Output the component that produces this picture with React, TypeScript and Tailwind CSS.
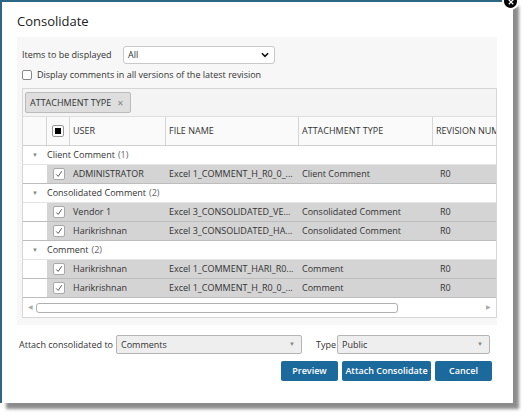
import React from "react";

type Row = { user: string; file: string; type: string; rev: string };
type Group = { name: string; count: number; rows: Row[] };

const groups: Group[] = [
  {
    name: "Client Comment",
    count: 1,
    rows: [{ user: "ADMINISTRATOR", file: "Excel 1_COMMENT_H_R0_0_...", type: "Client Comment", rev: "R0" }],
  },
  {
    name: "Consolidated Comment",
    count: 2,
    rows: [
      { user: "Vendor 1", file: "Excel 3_CONSOLIDATED_VE...", type: "Consolidated Comment", rev: "R0" },
      { user: "Harikrishnan", file: "Excel 3_CONSOLIDATED_HA...", type: "Consolidated Comment", rev: "R0" },
    ],
  },
  {
    name: "Comment",
    count: 2,
    rows: [
      { user: "Harikrishnan", file: "Excel 1_COMMENT_HARI_R0...", type: "Comment", rev: "R0" },
      { user: "Harikrishnan", file: "Excel 1_COMMENT_H_R0_0_...", type: "Comment", rev: "R0" },
    ],
  },
];

function Check() {
  return (
    <span className="flex h-[12px] w-[12px] items-center justify-center rounded-[2px] border border-[#a9a9a9] bg-white">
      <svg width="8" height="8" viewBox="0 0 10 10">
        <path d="M1.5 5.5 L4 8 L8.5 1.5" fill="none" stroke="#555" strokeWidth="1.2" />
      </svg>
    </span>
  );
}

function GroupRow({ g }: { g: Group }) {
  return (
    <div className="flex h-[19px] items-center border-b border-[#e4e4e4] bg-white">
      <span className="w-[24px] pl-[9px] text-[6px] text-[#888]">▼</span>
      <span className="text-[#333]">{g.name}</span>
      <span className="ml-[3px] text-[#666]">({g.count})</span>
    </div>
  );
}

function DataRow({ r }: { r: Row }) {
  return (
    <div className="flex h-[19px] items-center border-b border-[#bdbdbd]">
      <div className="h-full w-[24px] bg-white" />
      <div className="flex h-full flex-1 items-center whitespace-nowrap bg-[#d4d4d4] text-[#333]">
        <div className="flex w-[23px] justify-center">
          <Check />
        </div>
        <div className="w-[96px] overflow-hidden pl-[3px]">{r.user}</div>
        <div className="w-[133px] overflow-hidden pl-[3px]">{r.file}</div>
        <div className="w-[134px] overflow-hidden pl-[3px]">{r.type}</div>
        <div className="flex-1 pl-[7px]">{r.rev}</div>
      </div>
    </div>
  );
}

function GraySelect({ value, className }: { value: string; className: string }) {
  return (
    <div
      className={`flex h-[19px] items-center justify-between rounded-[2px] border border-[#b5b5b5] bg-[#eeeeee] pl-[4px] pr-[6px] text-[#333] ${className}`}
    >
      <span>{value}</span>
      <span className="text-[6px] text-[#888]">▼</span>
    </div>
  );
}

export default function App() {
  return (
    <div
      className="relative h-[418px] w-[529px] overflow-hidden bg-white text-[9px]"
      style={{ fontFamily: '"Open Sans", "Noto Sans", sans-serif' }}
    >
      <div className="relative h-[403px] w-[513px] border-l-[2px] border-t-[2px] border-[#2d6683] bg-white shadow-[6px_6px_3px_rgba(0,0,0,0.45)]">
        {/* close button */}
        <div className="absolute -right-[6px] -top-[9px] flex h-[17px] w-[17px] items-center justify-center rounded-full border-[2px] border-white bg-black">
          <svg width="6" height="6" viewBox="0 0 8 8">
            <path d="M1 1 L7 7 M7 1 L1 7" stroke="white" strokeWidth="1.6" />
          </svg>
        </div>

        <div className="h-[35px] pl-[15px] pt-[10px] text-[13px] leading-[18px] text-[#222]">Consolidate</div>

        <div className="ml-[15px] h-[288px] w-[480px] bg-[#f7f7f7] pl-[5px] pt-[9px]">
          <div className="flex h-[18px] items-center">
            <span className="w-[101px] whitespace-nowrap text-[#333]">Items to be displayed</span>
            <div className="flex h-[18px] w-[152px] items-center justify-between rounded-[3px] border border-[#c8c8c8] bg-white pl-[4px] pr-[5px] text-[#333]">
              <span>All</span>
              <svg width="8" height="6" viewBox="0 0 9 6">
                <path d="M1 1 L4.5 4.5 L8 1" fill="none" stroke="#111" strokeWidth="1.8" />
              </svg>
            </div>
          </div>
          <div className="mt-[5px] flex h-[12px] items-center">
            <span className="h-[10px] w-[10px] rounded-[2px] border border-[#888] bg-white" />
            <span className="ml-[5px] text-[#333]">Display comments in all versions of the latest revision</span>
          </div>

          {/* grid */}
          <div className="mt-[7px] h-[230px] w-[475px] overflow-hidden border border-[#d6d6d6] bg-white">
            <div className="flex h-[28px] items-center border-b border-[#dedede] bg-[#f4f4f4] pl-[2px]">
              <div className="flex h-[21px] items-center rounded-[2px] border border-[#bbbbbb] bg-[#dedede] pl-[4px] pr-[6px] text-[9px] text-[#333]">
                ATTACHMENT TYPE
                <span className="ml-[6px] text-[8px] text-[#888]">✕</span>
              </div>
            </div>
            <div className="flex h-[29px] items-stretch border-b border-[#d0d0d0] bg-[#fafafa] text-[#333]">
              <div className="w-[24px] border-r border-[#d6d6d6]" />
              <div className="flex w-[23px] items-center justify-center border-r border-[#d6d6d6]">
                <span className="flex h-[12px] w-[12px] items-center justify-center rounded-[2px] border border-[#999] bg-white">
                  <span className="h-[6px] w-[6px] bg-black" />
                </span>
              </div>
              <div className="flex w-[96px] items-center border-r border-[#d6d6d6] pl-[3px]">USER</div>
              <div className="flex w-[133px] items-center border-r border-[#d6d6d6] pl-[3px]">FILE NAME</div>
              <div className="flex w-[134px] items-center border-r border-[#d6d6d6] pl-[3px]">ATTACHMENT TYPE</div>
              <div className="flex flex-1 items-center overflow-hidden whitespace-nowrap pl-[3px]">REVISION NUMBER</div>
            </div>
            {groups.map((g) => (
              <React.Fragment key={g.name}>
                <GroupRow g={g} />
                {g.rows.map((r, i) => (
                  <DataRow key={i} r={r} />
                ))}
              </React.Fragment>
            ))}
            <div className="mt-[4px] flex h-[11px] items-center px-[5px]">
              <span className="text-[6px] text-[#aaa]">◀</span>
              <div className="ml-[3px] h-[10px] w-[362px] rounded-[3px] border border-[#b0b0b0] bg-white" />
              <div className="flex-1" />
              <span className="text-[6px] text-[#aaa]">▶</span>
            </div>
          </div>
        </div>

        <div className="mt-[10px] flex h-[19px] items-center pl-[17px]">
          <span className="w-[97px] whitespace-nowrap text-[#333]">Attach consolidated to</span>
          <GraySelect value="Comments" className="w-[186px]" />
          <span className="ml-[14px] w-[21px] text-[#333]">Type</span>
          <GraySelect value="Public" className="w-[153px]" />
        </div>
        <div className="mt-[7px] flex justify-end gap-[4px] pr-[21px]">
          <button className="h-[20px] w-[57px] rounded-[2px] bg-[#1c6a9b] text-[9px] font-semibold text-white">Preview</button>
          <button className="h-[20px] w-[89px] whitespace-nowrap rounded-[2px] bg-[#1c6a9b] text-[9px] font-semibold text-white">Attach Consolidate</button>
          <button className="h-[20px] w-[57px] rounded-[2px] bg-[#1c6a9b] text-[9px] font-semibold text-white">Cancel</button>
        </div>
      </div>
    </div>
  );
}
